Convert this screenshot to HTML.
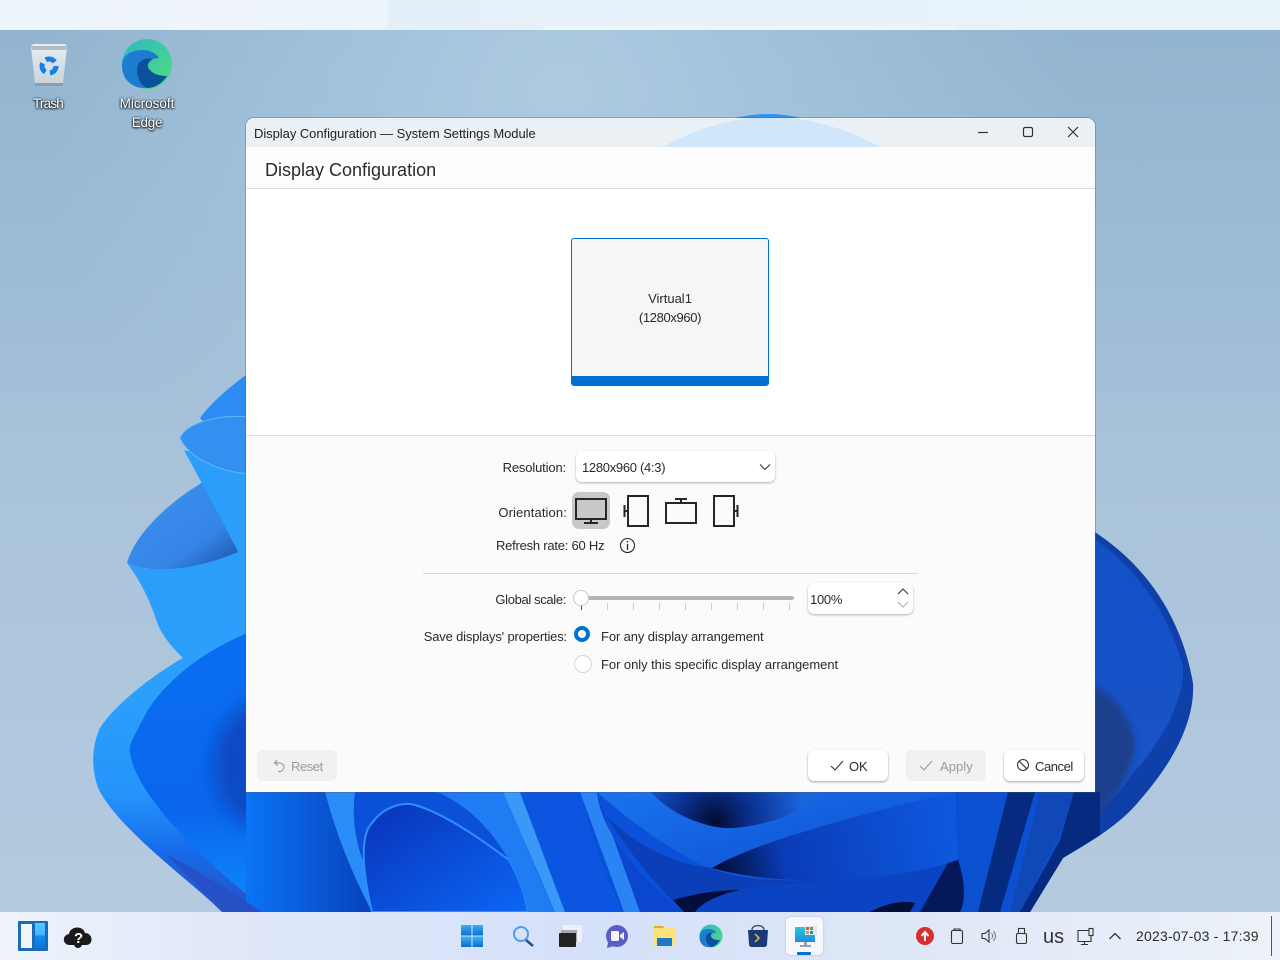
<!DOCTYPE html>
<html><head><meta charset="utf-8"><style>
html,body{margin:0;padding:0}
body{width:1280px;height:960px;position:relative;overflow:hidden;font-family:"Liberation Sans",sans-serif;font-size:13px;color:#2a2a2a;background:#a9c4db}
.a{position:absolute;white-space:nowrap}
svg{position:absolute;left:0;top:0;overflow:visible}
.btn{position:absolute;height:31px;border-radius:6px;background:#fff;box-shadow:0 1px 2px rgba(0,0,0,.35);top:750px}
.dis{background:#f1f1f1;box-shadow:none;color:#9a9a9a}
.dt{color:#fff;text-shadow:0 1px 2px #000,0 0 2px #000;text-align:center;font-size:13.5px;line-height:19px}
</style></head><body>
<svg width="1280" height="960" viewBox="0 0 1280 960">
<defs>
<linearGradient id="bgv" x1="0" y1="0" x2="0" y2="1"><stop offset="0" stop-color="#90b3cf"/><stop offset=".5" stop-color="#a9c3da"/><stop offset="1" stop-color="#b6cbe0"/></linearGradient>
<radialGradient id="bgh" gradientUnits="userSpaceOnUse" cx="560" cy="90" r="520"><stop offset="0" stop-color="#adcae0" stop-opacity="1"/><stop offset="1" stop-color="#adcae0" stop-opacity="0"/></radialGradient>
<linearGradient id="p3" x1="0" y1="0" x2="1" y2="1"><stop offset="0" stop-color="#3f93f0"/><stop offset=".65" stop-color="#3484e6"/><stop offset="1" stop-color="#174595"/></linearGradient>
<linearGradient id="rim" gradientUnits="userSpaceOnUse" x1="0" y1="700" x2="0" y2="912"><stop offset="0" stop-color="#2a9ffb"/><stop offset=".45" stop-color="#2594fa"/><stop offset=".72" stop-color="#156ae8"/><stop offset="1" stop-color="#2a50c4"/></linearGradient>
<linearGradient id="in4" gradientUnits="userSpaceOnUse" x1="0" y1="700" x2="0" y2="900"><stop offset="0" stop-color="#0a6cf0"/><stop offset=".55" stop-color="#0a66ec"/><stop offset="1" stop-color="#0d86fb"/></linearGradient>
<linearGradient id="bl" x1="0" y1="0" x2="1" y2="0"><stop offset="0" stop-color="#0b74f4"/><stop offset="1" stop-color="#0841bb"/></linearGradient>
<linearGradient id="arch" x1="0" y1="0" x2="1" y2="1"><stop offset="0" stop-color="#0833b8"/><stop offset="1" stop-color="#0c66f4"/></linearGradient>
<linearGradient id="big" x1="0" y1="0" x2="1" y2="1"><stop offset="0" stop-color="#1a74ee"/><stop offset="1" stop-color="#0a48cc"/></linearGradient>
<radialGradient id="sw" gradientUnits="userSpaceOnUse" cx="715" cy="822" r="90"><stop offset="0" stop-color="#030c2e"/><stop offset=".4" stop-color="#0a2f8f"/><stop offset="1" stop-color="#1a66dc"/></radialGradient>
<linearGradient id="wed" gradientUnits="userSpaceOnUse" x1="712" y1="868" x2="950" y2="820"><stop offset="0" stop-color="#020a2c"/><stop offset=".3" stop-color="#0a3cb8"/><stop offset="1" stop-color="#0e58de"/></linearGradient>
<linearGradient id="r1" x1="0" y1="0" x2="0" y2="1"><stop offset="0" stop-color="#1350c6"/><stop offset="1" stop-color="#1a54c8"/></linearGradient>
<filter id="b2" x="-50%" y="-50%" width="200%" height="200%"><feGaussianBlur stdDeviation="9"/></filter>
<filter id="b1"><feGaussianBlur stdDeviation="3"/></filter>
</defs>
<rect width="1280" height="960" fill="url(#bgv)"/>
<rect width="1280" height="640" fill="url(#bgh)"/>
<!-- peak above window -->
<path d="M735 118Q770 110 800 118Z" fill="#2f94f2"/>
<!-- left petals -->
<path d="M250 372C228 388 210 404 200 418L250 480Z" fill="#2d8cf3"/>
<path d="M203 482C165 505 135 535 127 563C160 578 210 565 250 548V480Z" fill="url(#p3)"/>
<path d="M127 563C140 580 150 600 158 625C165 640 175 650 183 658L250 628V547C210 565 160 578 127 563Z" fill="#2a9efa"/>
<path d="M184 450C200 480 222 520 238 552L250 552V470Z" fill="#2a9efa"/>
<path d="M180 438C186 424 215 414 250 417V474C222 472 190 460 180 438Z" fill="#338ff0" stroke="#5fb4fa" stroke-width="1"/>
<!-- lobe 4 -->
<path d="M250 622C190 650 125 690 100 728C90 750 92 775 100 792C125 835 190 880 222 912H330V622Z" fill="url(#rim)"/>
<path d="M250 632C205 650 165 680 145 715C135 735 128 745 130 753C135 790 190 850 260 905V632Z" fill="url(#in4)"/>
<ellipse cx="262" cy="765" rx="48" ry="62" fill="#0a48c2" filter="url(#b2)"/>
<!-- right lobe -->
<path d="M1090 529C1140 560 1180 610 1193 683C1195 720 1175 760 1140 800C1120 825 1090 842 1063 858L1030 912H700V529Z" fill="#0f3fa8"/>
<path d="M1090 536C1135 565 1170 615 1183 667C1185 700 1160 745 1133 773C1120 795 1095 815 1070 830H900V536Z" fill="url(#r1)"/>
<path d="M1090 683C1118 695 1135 725 1135 750C1125 790 1105 810 1090 822Z" fill="#1a3f8e" filter="url(#b1)"/>
<!-- bottom base -->
<path d="M246 792H1100V835L1063 858L1030 912H246Z" fill="#0a50d8"/>
<path d="M246 792H325L372 912H246Z" fill="url(#bl)"/>
<path d="M165 853C190 880 215 900 225 912H262C230 890 195 870 165 853Z" fill="#2550c6"/>
<path d="M325 792H355C350 830 360 875 396 912H372C350 870 335 830 325 792Z" fill="#2a8cf6"/>
<path d="M372 912C362 870 360 835 372 823C385 805 405 802 415 805C450 815 495 850 509 860C520 880 525 895 528 912Z" fill="url(#arch)" stroke="#2f8ff7" stroke-width="2"/>
<path d="M437 792H503C520 830 540 880 555 912H528C520 870 490 815 437 792Z" fill="#1f7cf2"/>
<path d="M503 792H520L565 912H555Z" fill="#3a98f8"/>
<path d="M520 792H580C590 830 605 880 624 912H565Z" fill="#0b55e0"/>
<path d="M580 792H597L640 912H624Z" fill="#2a84f4"/>
<path d="M597 792C600 830 640 880 684 912H640Z" fill="#0a46d0"/>
<path d="M597 792H960L958 860C880 880 800 892 740 880C690 865 640 830 597 792Z" fill="url(#big)"/>
<path d="M684 912C650 880 625 845 605 815C640 850 680 865 712 868C760 890 880 880 958 860L970 912Z" fill="#0a3fb8"/>
<path d="M673 900C720 885 850 885 948 863L930 912H684Z" fill="#0a44c2"/>
<path d="M673 900C690 895 715 890 740 890C715 895 700 905 695 912H684Z" fill="#030f3a"/>
<path d="M870 912C885 903 905 900 915 903L910 912Z" fill="#030f3a"/>
<path d="M651 792C670 815 710 830 734 828C770 825 810 810 821 792Z" fill="url(#sw)"/>
<path d="M712 868C760 840 860 815 953 792L958 860C900 880 790 890 712 868Z" fill="url(#wed)"/>
<path d="M955 792H1068L1100 833L1063 858L1030 912H960C965 890 962 870 958 860Z" fill="#0a50d0"/>
<path d="M948 863L958 860C965 880 966 900 960 912H920Z" fill="#05195a"/>
<path d="M1008 792H1035L1000 912H978Z" fill="#062a80"/>
<path d="M1040 792H1074L1062 830L1020 912H1010Z" fill="#1148b8"/>
<path d="M1074 792H1100V835L1063 858L1030 912H1020L1060 840Z" fill="#062a80"/>
</svg>

<!-- top bar -->
<div class="a" style="left:0;top:0;width:1280px;height:30px;background:linear-gradient(90deg,#eef5fa 0,#edf4fa 387px,#e4f0f9 388px,#e6f1fa 700px,#e8f2f9 1280px)"></div>
<div class="a" style="left:545px;top:26px;width:410px;height:4px;background:#eef5fb"></div>

<!-- desktop icons -->
<svg width="1280" height="130">
<defs><linearGradient id="bin" x1="0" y1="0" x2="0" y2="1"><stop offset="0" stop-color="#e8eef2"/><stop offset="1" stop-color="#c6d2da"/></linearGradient>
<linearGradient id="e1" x1="0" y1="0" x2="1" y2="1"><stop offset="0" stop-color="#2fb7c4"/><stop offset="1" stop-color="#4fe07d"/></linearGradient></defs>
<path d="M31 47Q31 44 35 44H63Q67 44 67 47L63 83Q63 86 59 86H39Q35 86 35 83Z" fill="url(#bin)"/>
<path d="M31 46H67L66 50H32Z" fill="#9fb0ba" opacity=".8"/>
<rect x="35" y="83" width="28" height="3" fill="#8f9da7"/>
<circle cx="49" cy="66" r="7" fill="none" stroke="#1780e2" stroke-width="5" stroke-dasharray="10 4.700"/>
<circle cx="147" cy="64" r="25" fill="url(#e1)"/>
<path d="M122 66C122 54 133 50 142 50C150 50 156 53 159 58L153 59C146 57 137 60 137 70C137 78 141 86 147 88C133 89 122 80 122 66Z" fill="#1b7cd0"/>
<path d="M137 70C137 60 146 57 153 59C148 62 146 66 150 70C154 75 162 76 167 76C162 84 154 88 147 88C141 86 137 78 137 70Z" fill="#0c4f9c"/>
</svg>
<div class="a dt" style="left:18px;top:94px;width:60px;letter-spacing:-.8px">Trash</div>
<div class="a dt" style="left:107px;top:94px;width:80px">Microsoft<br><span style="letter-spacing:-.3px">Edge</span></div>

<!-- window -->
<div class="a" style="left:246px;top:118px;width:849px;height:674px;background:#fff;border-radius:8px 8px 0 0;overflow:hidden;box-shadow:0 0 0 1px rgba(70,90,110,.35)">
 <div class="a" style="left:0;top:0;width:849px;height:29px;background:#ebf0f4"></div>
 <svg width="849" height="30"><path d="M417 29C450 10 490 -1 525 -1C560 -1 600 10 634 29Z" fill="#cfe6fb"/></svg>
 <div class="a" style="left:8px;top:8px;font-size:13px;letter-spacing:-.05px;color:#222">Display Configuration — System Settings Module</div>
 <svg width="849" height="30" fill="none" stroke="#333" stroke-width="1.200"><path d="M732 14.500H742"/><rect x="777.500" y="9.500" width="9" height="9" rx="1.500"/><path d="M822 9L832 19M832 9L822 19"/></svg>
 <div class="a" style="left:0;top:29px;width:849px;height:41px;background:#fdfdfd;border-bottom:1px solid #dedede"></div>
 <div class="a" style="left:19px;top:42px;font-size:18px;color:#2b2b2b">Display Configuration</div>
 <div class="a" style="left:0;top:317px;width:849px;height:357px;background:#fbfbfb;border-top:1px solid #dcdcdc"></div>
 <!-- monitor -->
 <div class="a" style="left:325px;top:120px;width:196px;height:146px;background:#f6f6f6;border:1px solid #0071ce;border-radius:3px;overflow:hidden"><div class="a" style="left:0;bottom:0;width:196px;height:9px;background:#0071ce"></div></div>
 <div class="a" style="left:325px;top:171px;width:198px;text-align:center;line-height:19px;font-size:13px">Virtual1<br><span style="letter-spacing:-.35px">(1280x960)</span></div>
</div>

<!-- form -->
<div class="a" style="right:714px;top:460px;letter-spacing:-.15px">Resolution:</div>
<div class="a" style="left:576px;top:451px;width:199px;height:31px;background:#fff;border-radius:6px;box-shadow:0 1px 2px rgba(0,0,0,.3)"></div>
<div class="a" style="left:582px;top:460px;letter-spacing:-.3px">1280x960 (4:3)</div>
<svg width="1280" height="960" fill="none" stroke="#333" stroke-width="1.100"><path d="M760 464.500L765 469.500L770 464.500"/></svg>
<div class="a" style="right:713px;top:505px;letter-spacing:.12px">Orientation:</div>
<div class="a" style="left:572px;top:492px;width:38px;height:37px;border-radius:7px;background:#c8c8c8"></div>
<svg width="1280" height="960" fill="none" stroke="#262626" stroke-width="2">
<rect x="576" y="499" width="30" height="20"/><path d="M591 519V522M584 523H598"/>
<rect x="628" y="496" width="20" height="30"/><path d="M628 511H624.500M624.500 505V517"/>
<rect x="666" y="503" width="30" height="20"/><path d="M681 503V499M675 499H687"/>
<rect x="714" y="496" width="20" height="30"/><path d="M734 511H737.500M737.500 505V517"/>
<circle cx="627.500" cy="545.500" r="7" stroke-width="1.100"/><path d="M627.500 544V550" stroke-width="1.300"/><path d="M627.500 541V542.500" stroke-width="1.300"/>
</svg>
<div class="a" style="left:496px;top:538px;letter-spacing:-.23px">Refresh rate: 60 Hz</div>
<div class="a" style="left:423px;top:573px;width:495px;height:1px;background:#d8d8d8"></div>

<div class="a" style="right:714px;top:592px;letter-spacing:-.35px">Global scale:</div>
<div class="a" style="left:581px;top:596px;width:213px;height:4px;background:#b5b5b5;border-radius:2px"></div>
<svg width="1280" height="960" stroke="#ccc" stroke-width="1"><path d="M607.500 603V610M633.500 603V610M659.500 603V610M685.500 603V610M711.500 603V610M737.500 603V610M763.500 603V610M789.500 603V610"/><path d="M581.500 604V610" stroke="#555"/></svg>
<div class="a" style="left:573px;top:590px;width:14px;height:14px;border-radius:50%;background:#fff;border:1px solid #c8c8c8"></div>
<div class="a" style="left:808px;top:583px;width:105px;height:31px;background:#fff;border-radius:6px;box-shadow:0 1px 2px rgba(0,0,0,.3)"></div>
<div class="a" style="left:810px;top:592px;letter-spacing:-.27px">100%</div>
<svg width="1280" height="960" fill="none"><path d="M898 594L903 589L908 594" stroke="#333" stroke-width="1"/><path d="M898 602L903 607L908 602" stroke="#aaa" stroke-width="1"/></svg>

<div class="a" style="right:713px;top:629px;letter-spacing:-.17px">Save displays' properties:</div>
<div class="a" style="left:574px;top:626px;width:8px;height:8px;border-radius:50%;background:#fff;border:4.500px solid #0071ce"></div>
<div class="a" style="left:601px;top:629px;letter-spacing:-.11px">For any display arrangement</div>
<div class="a" style="left:574px;top:655px;width:16px;height:16px;border-radius:50%;background:#fff;border:1px solid #d5d5d5"></div>
<div class="a" style="left:601px;top:657px;letter-spacing:-.05px">For only this specific display arrangement</div>

<!-- buttons -->
<div class="btn dis" style="left:257px;width:80px"></div>
<div class="a" style="left:291px;top:759px;color:#9a9a9a;letter-spacing:-.44px">Reset</div>
<div class="btn" style="left:808px;width:80px"></div>
<div class="a" style="left:849px;top:759px;letter-spacing:-.15px">OK</div>
<div class="btn dis" style="left:906px;width:80px"></div>
<div class="a" style="left:940px;top:759px;color:#9a9a9a;letter-spacing:.05px">Apply</div>
<div class="btn" style="left:1004px;width:80px"></div>
<div class="a" style="left:1035px;top:759px;letter-spacing:-.43px">Cancel</div>
<svg width="1280" height="960" fill="none" stroke-width="1.100">
<path d="M277 760L274.500 763L278 765.500M275 763C280 762 284 764 284 767C284 770 281 772 278 771.500" stroke="#9a9a9a"/>
<path d="M831 766L835 770L843 761" stroke="#333"/>
<path d="M920 766L924 770L932 761" stroke="#9a9a9a"/>
<circle cx="1023" cy="765" r="5.500" stroke="#333"/><path d="M1019 761L1027 769" stroke="#333"/>
</svg>

<!-- taskbar -->
<div class="a" style="left:0;top:912px;width:1280px;height:48px;background:linear-gradient(90deg,#eef3fb 0,#dfe7f9 250px,#d5e0f9 600px,#dde6f7 850px,#edf2f8 1280px)"></div>
<div class="a" style="left:786px;top:917px;width:37px;height:38px;border-radius:5px;background:#f5f7fd;box-shadow:0 0 2px rgba(0,0,0,.2)"></div>
<div class="a" style="left:797px;top:952px;width:14px;height:3px;background:#0071ce;border-radius:1px"></div>
<div class="a" style="left:1271px;top:916px;width:1px;height:40px;background:#555"></div>
<svg width="1280" height="960">
<defs><linearGradient id="wb" x1="0" y1="0" x2="0" y2="1"><stop offset="0" stop-color="#3fb0f2"/><stop offset="1" stop-color="#0a6fd0"/></linearGradient>
<linearGradient id="mon" x1="0" y1="0" x2="0" y2="1"><stop offset="0" stop-color="#30c4d8"/><stop offset="1" stop-color="#1a8fe0"/></linearGradient>
<linearGradient id="rp" x1="0" y1="0" x2="0" y2="1"><stop offset="0" stop-color="#5cc8fb"/><stop offset=".5" stop-color="#3fb4f8"/><stop offset=".51" stop-color="#0d8cf0"/><stop offset="1" stop-color="#0a78dc"/></linearGradient></defs>
<!-- left -->
<rect x="18" y="921" width="30" height="30" rx="1" fill="#1a6cb8"/>
<rect x="21" y="924" width="11" height="24" fill="#f2f4f7"/>
<rect x="35" y="923" width="10" height="25" fill="url(#rp)"/>
<path d="M70 945C62 945 62 935 69 934C70 926 83 925 85 933C93 933 94 945 86 945Z" fill="#1a1a1a"/>
<circle cx="78" cy="944" r="4" fill="#1a1a1a"/>
<!-- start -->
<g fill="url(#wb)"><rect x="461" y="925" width="10.500" height="10.500"/><rect x="472.500" y="925" width="10.500" height="10.500"/><rect x="461" y="936.500" width="10.500" height="10.500"/><rect x="472.500" y="936.500" width="10.500" height="10.500"/></g>
<!-- search -->
<circle cx="521" cy="934" r="7" fill="none" stroke="#4a9df0" stroke-width="2"/><path d="M526 940L533 946" stroke="#24548e" stroke-width="2.500"/>
<!-- task view -->
<rect x="563" y="925" width="19" height="17" rx="1" fill="#eef1f6"/><rect x="561" y="930" width="16" height="12" fill="#a9a9a9"/><rect x="559" y="933" width="17" height="14" rx="1" fill="#222"/>
<!-- meet -->
<circle cx="617" cy="936" r="11" fill="#5a5fc8"/><path d="M608 942L607 948L614 946Z" fill="#5a5fc8"/><rect x="611" y="931" width="8" height="10" rx="1.500" fill="#f3f3fb"/><path d="M620 935L624 932V940L620 937Z" fill="#f3f3fb"/>
<!-- files -->
<path d="M654 926H663L665 929H654Z" fill="#e3a92c"/><rect x="654" y="928" width="21" height="18" rx="1" fill="#fbe27a"/><rect x="657" y="938" width="15" height="8" fill="#1e78c8"/>
<!-- edge -->
<circle cx="711" cy="936" r="11.500" fill="url(#e1)"/><path d="M699.500 937C699.500 931 704 929 708 929C712 929 715 930 716 933L713 933C710 932 706 933 706 938C706 942 708 946 711 947C704 948 699.500 944 699.500 937Z" fill="#1b7cd0"/><path d="M706 938C706 933 710 932 713 933C711 934 710 936 712 938C714 940 718 940 720 940C718 944 714 947 711 947C708 946 706 942 706 938Z" fill="#0c4f9c"/>
<!-- store -->
<path d="M748 930H768L767 944Q767 947 764 947H752Q749 947 749 944Z" fill="#1c3a78"/><path d="M752 930C752 924 764 924 764 930" fill="none" stroke="#555" stroke-width="1.500"/><path d="M755 934L759 938L755 942" fill="none" stroke="#e4c23a" stroke-width="1.500"/>
<!-- display settings -->
<rect x="795" y="927" width="20" height="15" fill="url(#mon)"/><rect x="805" y="926" width="12" height="9" fill="#e5e5e5"/><rect x="806" y="927" width="3" height="3" fill="#d9534f"/><rect x="810" y="927" width="3" height="3" fill="#55a84f"/><rect x="806" y="931" width="3" height="3" fill="#e0a030"/><rect x="810" y="931" width="3" height="3" fill="#3a7fd0"/>
<path d="M804 942H807V945H811V947H800V945H804Z" fill="#9aa0a8"/>
<!-- tray -->
<circle cx="925" cy="936" r="9" fill="#d9302f"/><path d="M925 941V934M921.500 936L925 932L928.500 936" fill="none" stroke="#fff" stroke-width="2"/>
<g fill="none" stroke="#333" stroke-width="1.100">
<rect x="951.500" y="930.500" width="11" height="13" rx="1.500"/><path d="M954 930.500V929H960V930.500"/>
<path d="M982 933.500H985L989 930V942L985 938.500H982Z"/><path d="M991.500 933Q994 936 991.500 939M993.500 931Q997.500 936 993.500 941" stroke="#888"/>
<rect x="1016.500" y="933.500" width="10" height="10" rx="1.500"/><rect x="1018.500" y="928.500" width="6" height="5"/>
<path d="M1078 930.500H1091V941.500H1078ZM1084.500 941.500V944M1081 944.500H1088"/><rect x="1089" y="928.500" width="4" height="7" fill="#eef2f8"/>
<path d="M1109.500 939L1115 933.500L1120.500 939" stroke-width="1.300"/>
</g>
</svg>
<div class="a" style="left:74px;top:930px;font-size:15px;font-weight:bold;color:#fff">?</div>
<div class="a" style="left:1043px;top:926px;font-size:20px;color:#333">us</div>
<div class="a" style="left:1136px;top:928px;font-size:14px;color:#2a2a2a;letter-spacing:.2px">2023-07-03 - 17:39</div>
</body></html>
